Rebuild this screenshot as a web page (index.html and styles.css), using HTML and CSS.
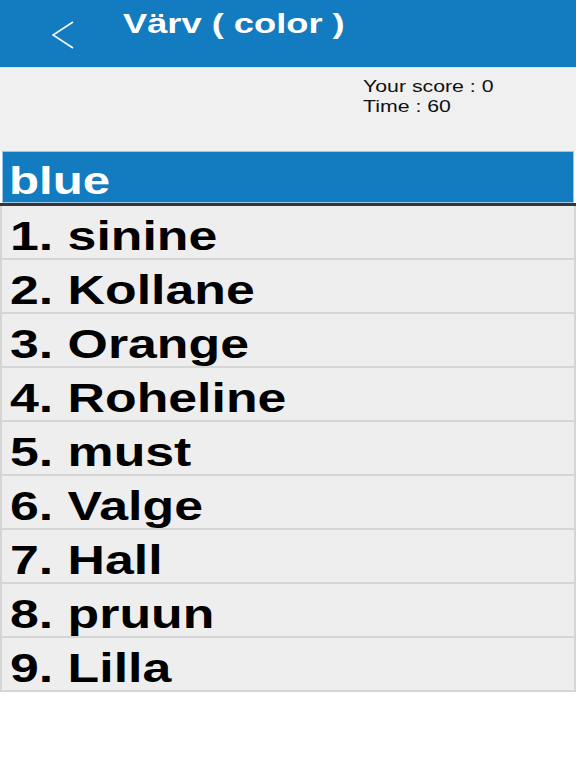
FILE: index.html
```html
<!DOCTYPE html>
<html lang="et">
<head>
<meta charset="utf-8">
<title>Värv ( color )</title>
<link rel="stylesheet" href="styles.css">
</head>
<body>
<header class="topbar">
  <svg class="back" width="24" height="32" viewBox="0 0 24 32" aria-hidden="true">
    <polyline points="21,1 1,14 21,27" fill="none" stroke="#ffffff" stroke-width="1.6" stroke-linejoin="miter"/>
  </svg>
  <h1 class="title"><span class="stretch">Värv ( color )</span></h1>
</header>
<section class="status">
  <div class="score">
    <div><span class="stretch wide">Your score : 0</span></div>
    <div><span class="stretch wide">Time : 60</span></div>
  </div>
</section>
<div class="question"><span class="stretch">blue</span></div>
<ol class="answers">
  <li class="row"><span class="stretch">1. sinine</span></li>
  <li class="row"><span class="stretch">2. Kollane</span></li>
  <li class="row"><span class="stretch">3. Orange</span></li>
  <li class="row"><span class="stretch">4. Roheline</span></li>
  <li class="row"><span class="stretch">5. must</span></li>
  <li class="row"><span class="stretch">6. Valge</span></li>
  <li class="row"><span class="stretch">7. Hall</span></li>
  <li class="row"><span class="stretch">8. pruun</span></li>
  <li class="row"><span class="stretch">9. Lilla</span></li>
</ol>
</body>
</html>
```

FILE: styles.css
```css
html, body {
  margin: 0;
  padding: 0;
  background: #ffffff;
  font-family: "Liberation Sans", Arial, sans-serif;
}

.stretch {
  display: inline-block;
  transform: scaleX(1.295);
  transform-origin: 0 50%;
  white-space: nowrap;
}

.stretch.wide {
  transform: scaleX(1.33);
}

.topbar {
  height: 67px;
  background: #137bbf;
  border-bottom: 1px solid #d7e6f0;
  display: flex;
  align-items: flex-start;
}

.back {
  margin: 21px 0 0 52px;
  flex: none;
}

.title {
  margin: 0 0 0 47px;
  padding-top: 8px;
  color: #ffffff;
  font-size: 28px;
  font-weight: bold;
  line-height: 32px;
}

.status {
  height: 83px;
  background: #f0f0f0;
}

.score {
  margin-left: 363px;
  padding-top: 9px;
  font-size: 16px;
  line-height: 20px;
  color: #111111;
}

.question {
  margin: 0 2px;
  height: 52px;
  box-sizing: border-box;
  background: #137bbf;
  border: 1px solid #9cc6e3;
  color: #ffffff;
  font-size: 38px;
  font-weight: bold;
  line-height: 44px;
  padding: 7px 0 0 6px;
  overflow: hidden;
}

.answers {
  list-style: none;
  margin: 0;
  padding: 0;
  border-top: 3px solid #363636;
}

.row {
  background: #eeeeee;
  border-left: 2px solid #d6d6d6;
  border-right: 2px solid #d6d6d6;
  border-bottom: 2px solid #d6d6d6;
  padding: 9px 0 0 8px;
  height: 43px;
  line-height: 43px;
  font-size: 40px;
  font-weight: bold;
  color: #000000;
}
```
